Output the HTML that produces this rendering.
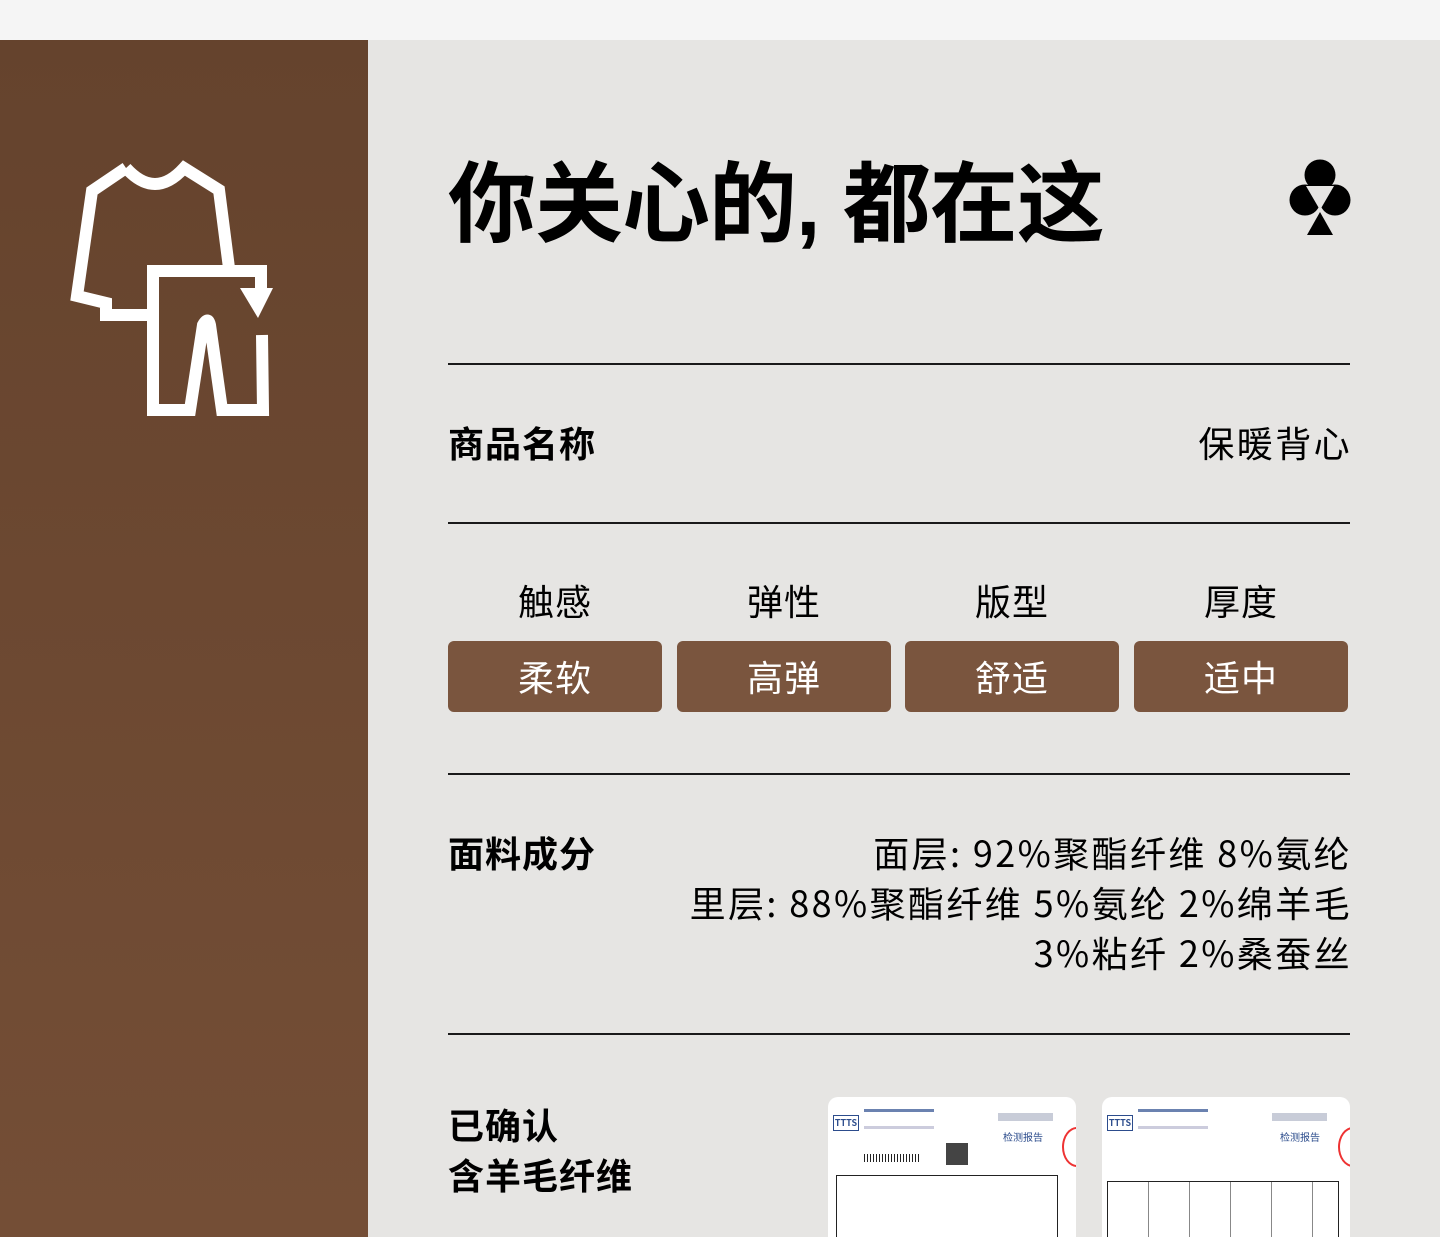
<!DOCTYPE html>
<html style="overflow:hidden;height:1237px"><head><meta charset="utf-8"><style>
*{margin:0;padding:0;box-sizing:border-box}
body{width:1440px;height:1237px;overflow:hidden;background:#e6e5e3;font-family:"Noto Sans CJK SC","Liberation Sans",sans-serif;position:relative;color:#000}
.top{position:absolute;left:0;top:0;width:1440px;height:40px;background:#f5f5f5}
.side{position:absolute;left:0;top:40px;width:368px;height:1197px;background:linear-gradient(#65432d,#744e36)}
.abs{position:absolute}
.line{position:absolute;left:448px;width:902px;height:2px;background:#1a1a1a}
.lbl{position:absolute;left:448px;font-size:36px;font-weight:bold;line-height:50px;letter-spacing:1px}
.val{position:absolute;right:88px;font-size:36px;text-align:right;line-height:50px;letter-spacing:2.4px}
.h{position:absolute;top:575px;width:214px;text-align:center;font-size:36px;line-height:50px;letter-spacing:1px}
.b{position:absolute;top:641px;width:214px;height:71px;background:#7a553e;border-radius:6px;color:#fff;text-align:center;font-size:36px;line-height:71px;letter-spacing:1px}
.card{position:absolute;top:1097px;width:248px;height:140px;background:#fff;border-radius:10px 10px 0 0;overflow:hidden}
</style></head><body>
<div class="top"></div>
<div class="side"></div>
<svg class="abs" style="left:0;top:0" width="368" height="440">
<g fill="none" stroke="#fff" stroke-width="12" stroke-linejoin="miter">
<path d="M126,168 Q155,200 184,168 L219,190 L229,268"/>
<path d="M126,168 L92,191 L77,296 L106,303 L106,315 L153,315"/>
<path d="M153,416 L153,271 L261,271 L261,292"/>
<path d="M262,335 L263,410 L222,410 L210,325 Q208,316 203,325 L190,410 L153,410"/>
</g>
<path d="M240,288 L273,288 L258,318 Z" fill="#fff"/>
</svg>
<div class="abs" style="left:448px;top:138px;font-size:88px;font-weight:bold;line-height:120px;letter-spacing:-1px;white-space:nowrap">你关心的<span style="font-family:'Liberation Sans',sans-serif">, </span>都在这</div>
<svg class="abs" style="left:1280px;top:150px" width="80" height="95">
<circle cx="40" cy="25" r="15.5"/><circle cx="25" cy="50" r="15.5"/><circle cx="55" cy="50" r="15.5"/>
<path d="M26,36 L54,36 L40,60 Z" fill="#e6e5e3"/>
<path d="M27,85 L53,85 L40,62 Z"/>
</svg>
<div class="line" style="top:363px"></div>
<div class="lbl" style="top:417px">商品名称</div>
<div class="val" style="top:417px">保暖背心</div>
<div class="line" style="top:522px"></div>
<div class="h" style="left:448px">触感</div><div class="h" style="left:677px">弹性</div><div class="h" style="left:905px">版型</div><div class="h" style="left:1134px">厚度</div>
<div class="b" style="left:448px">柔软</div><div class="b" style="left:677px">高弹</div><div class="b" style="left:905px">舒适</div><div class="b" style="left:1134px">适中</div>
<div class="line" style="top:773px"></div>
<div class="lbl" style="top:827px">面料成分</div>
<div class="val" style="top:827px">面层: 92%聚酯纤维 8%氨纶<br>里层: 88%聚酯纤维 5%氨纶 2%绵羊毛<br>3%粘纤 2%桑蚕丝</div>
<div class="line" style="top:1033px"></div>
<div class="lbl" style="top:1099px">已确认<br>含羊毛纤维</div>
<div class="card" style="left:828px">
<div class="abs" style="left:5px;top:18px;width:26px;height:16px;border:1px solid #2c4c8c;font-size:9px;color:#2c4c8c;text-align:center;font-weight:bold;line-height:14px">TTTS</div>
<div class="abs" style="left:36px;top:12px;width:70px;height:20px;border-top:3px solid #6b82b0;border-bottom:3px solid #ccd"></div>
<div class="abs" style="left:170px;top:16px;width:55px;height:8px;background:#c8ccd8"></div>
<div class="abs" style="left:175px;top:32px;font-size:10px;color:#2c4c8c">检测报告</div>
<div class="abs" style="left:118px;top:46px;width:22px;height:22px;background:#444"></div>
<div class="abs" style="left:36px;top:57px;width:55px;height:8px;background:repeating-linear-gradient(90deg,#222 0 1px,#fff 1px 3px)"></div>
<div class="abs" style="left:8px;top:78px;width:222px;height:80px;border:1px solid #222"></div>
<div class="abs" style="left:234px;top:30px;width:30px;height:40px;border:2px solid #e33;border-radius:50%"></div>
</div>
<div class="card" style="left:1102px">
<div class="abs" style="left:5px;top:18px;width:26px;height:16px;border:1px solid #2c4c8c;font-size:9px;color:#2c4c8c;text-align:center;font-weight:bold;line-height:14px">TTTS</div>
<div class="abs" style="left:36px;top:12px;width:70px;height:20px;border-top:3px solid #6b82b0;border-bottom:3px solid #ccd"></div>
<div class="abs" style="left:170px;top:16px;width:55px;height:8px;background:#c8ccd8"></div>
<div class="abs" style="left:178px;top:32px;font-size:10px;color:#2c4c8c">检测报告</div>
<div class="abs" style="left:5px;top:84px;width:232px;height:80px;border:1px solid #222;background:repeating-linear-gradient(90deg,transparent 0 40px,#888 40px 41px)"></div>
<div class="abs" style="left:236px;top:30px;width:30px;height:40px;border:2px solid #e33;border-radius:50%"></div>
</div>
</body></html>
